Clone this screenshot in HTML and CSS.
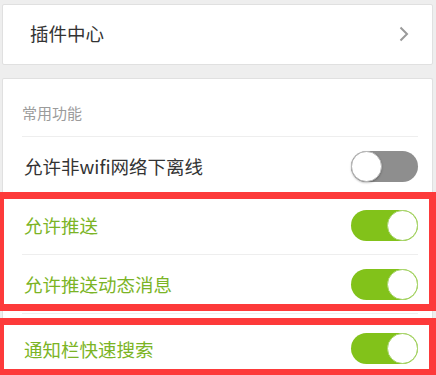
FILE: index.html
```html
<!DOCTYPE html>
<html lang="zh-CN">
<head>
<meta charset="utf-8">
<title>设置</title>
<link rel="stylesheet" href="styles.css">
</head>
<body>
<div class="page">
  <div class="card card-plugin">
    <span class="label">插件中心</span>
    <svg class="chevron" width="12" height="16" viewBox="0 0 12 16"><path d="M2.5 1.5 L9 8 L2.5 14.5" fill="none" stroke="#9a9a9a" stroke-width="2"/></svg>
  </div>

  <div class="card card-settings">
    <div class="section-title">常用功能</div>
    <div class="row">
      <span class="label">允许非wifi网络下离线</span>
      <span class="switch off"><span class="knob"></span></span>
    </div>
    <div class="row">
      <span class="label green">允许推送</span>
      <span class="switch on"><span class="knob"></span></span>
    </div>
    <div class="row">
      <span class="label green">允许推送动态消息</span>
      <span class="switch on"><span class="knob"></span></span>
    </div>
    <div class="row row-last">
      <span class="label green">通知栏快速搜索</span>
      <span class="switch on"><span class="knob"></span></span>
    </div>
  </div>

  <div class="mark mark-push"></div>
  <div class="mark mark-search"></div>
</div>
</body>
</html>
```

FILE: styles.css
```css
html, body {
  margin: 0;
  padding: 0;
  background: #eeeeee;
  font-family: "Noto Sans CJK SC", "Noto Sans", sans-serif;
  overflow: hidden;
}
.page {
  position: relative;
  width: 436px;
  height: 375px;
  padding-top: 4px;
  box-sizing: border-box;
}
.card {
  background: #ffffff;
  margin: 0 3px 0 2px;
  border: 1px solid #e0e0e0;
  border-radius: 2px;
  box-sizing: border-box;
}
.card-plugin {
  height: 61px;
  display: flex;
  align-items: center;
  justify-content: space-between;
  padding: 0 22px 3px 25px;
}
.card-plugin .label {
  font-size: 18.5px;
  color: #333333;
}
.chevron {
  display: block;
  margin-top: 2px;
}
.card-settings {
  margin-top: 13px;
  padding: 0 14px 0 19px;
  border-bottom: none;
}
.section-title {
  height: 57px;
  box-sizing: border-box;
  padding-top: 24px;
  font-size: 15px;
  line-height: 20px;
  color: #9b9b9b;
}
.row {
  height: 59px;
  box-sizing: border-box;
  border-top: 1px solid #eeeeee;
  display: flex;
  align-items: center;
  justify-content: space-between;
}
.row-last {
  height: 64px;
  padding-top: 6px;
}
.label {
  font-size: 18.5px;
  color: #333333;
  padding-left: 2px;
}
.label.green {
  color: #7bb425;
}
.switch {
  position: relative;
  width: 67px;
  height: 31px;
  border-radius: 16px;
  box-sizing: border-box;
  display: block;
}
.switch.off {
  background: #8e8e8e;
}
.switch.on {
  background: #82c21a;
}
.knob {
  position: absolute;
  top: 0;
  width: 31px;
  height: 31px;
  box-sizing: border-box;
  border-radius: 50%;
  background: #ffffff;
}
.switch.off .knob {
  left: 0;
  border: 1.5px solid #b8b8b8;
  box-shadow: 0 1px 2px rgba(0,0,0,0.25);
}
.switch.on .knob {
  right: 0;
  border: 1.5px solid #a6d36a;
}
.mark {
  position: absolute;
  left: 0;
  width: 436px;
  box-sizing: border-box;
  border-style: solid;
  border-color: #fd3a3a;
  border-width: 7px 7px 7px 4px;
}
.mark-push {
  top: 192px;
  height: 119px;
}
.mark-search {
  top: 318px;
  height: 58px;
}
```
